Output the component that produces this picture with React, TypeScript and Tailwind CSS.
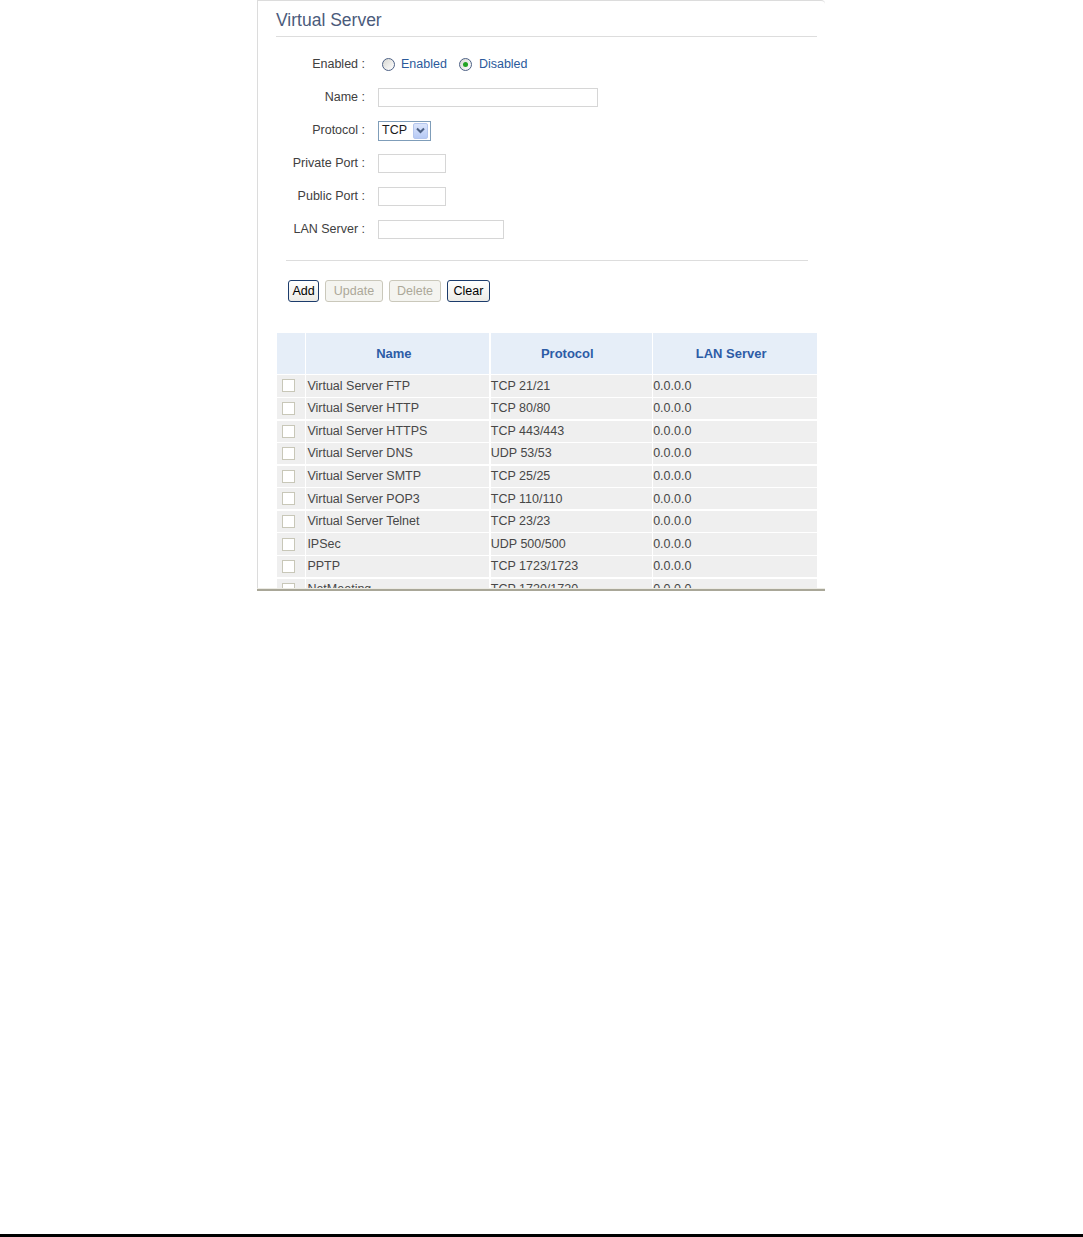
import React from "react";

const rows = [
  ["Virtual Server FTP", "TCP 21/21"],
  ["Virtual Server HTTP", "TCP 80/80"],
  ["Virtual Server HTTPS", "TCP 443/443"],
  ["Virtual Server DNS", "UDP 53/53"],
  ["Virtual Server SMTP", "TCP 25/25"],
  ["Virtual Server POP3", "TCP 110/110"],
  ["Virtual Server Telnet", "TCP 23/23"],
  ["IPSec", "UDP 500/500"],
  ["PPTP", "TCP 1723/1723"],
  ["NetMeeting", "TCP 1720/1720"],
];

const Radio = ({ checked }: { checked?: boolean }) => (
  <span className="flex h-[13px] w-[13px] items-center justify-center rounded-full border border-[#4d6185] bg-gradient-to-br from-[#d8d8d2] to-white">
    {checked && <span className="h-[5px] w-[5px] rounded-full bg-[#22a322]" />}
  </span>
);

const Field = ({ label, children }: { label: string; children: React.ReactNode }) => (
  <div className="flex h-[33px] items-center">
    <div className="w-[89px] whitespace-nowrap text-right text-[#404040]">{label}</div>
    <div className="ml-[13px] flex items-center">{children}</div>
  </div>
);

const Input = ({ w }: { w: string }) => <div className={`h-[19px] border border-[#d6d6d6] bg-white ${w}`} />;

const Btn = ({ label, w, disabled }: { label: string; w: string; disabled?: boolean }) => (
  <div
    className={`flex h-[22px] items-center justify-center rounded-[3px] border ${w} ${
      disabled
        ? "border-[#cac8bb] bg-[#f4f4f0] text-[#aca899]"
        : "border-[#1c3c6c] bg-gradient-to-b from-white to-[#ecebe6] text-black"
    }`}
  >
    {label}
  </div>
);

export default function App() {
  return (
    <div className="flex h-[1237px] flex-col bg-white text-[12.5px] leading-none" style={{ fontFamily: '"Liberation Sans", Arial, sans-serif' }}>
      <div className="ml-[257px] w-[568px]">
        <div className="h-[588px] overflow-hidden rounded-tr-[4px] border-l border-t border-[#dcdcdc] pl-[18px] pr-[8px]">
          <div className="flex h-[36px] items-center border-b border-[#dddddd] pt-[5px] text-[17.5px] text-[#4b5b7b]">
            Virtual Server
          </div>

          <div className="mt-[11px]">
            <Field label="Enabled :">
              <div className="ml-[4px] flex items-center gap-[6px] text-[#2b5a9b]">
                <Radio />
                <span>Enabled</span>
                <span className="ml-[6px]">
                  <Radio checked />
                </span>
                <span className="ml-[1px]">Disabled</span>
              </div>
            </Field>
            <Field label="Name :">
              <Input w="w-[220px]" />
            </Field>
            <Field label="Protocol :">
              <div className="flex h-[20px] w-[53px] items-center border border-[#7f9db9] bg-white pl-[3px] pr-[2px]">
                <span className="flex-1 text-[#1a1a1a]">TCP</span>
                <span className="flex h-[16px] w-[15px] items-center justify-center rounded-[2px] border border-[#b4c6ee] bg-gradient-to-b from-[#dbe5fb] to-[#b7caf5]">
                  <svg width="9" height="7" viewBox="0 0 9 7">
                    <path d="M1 1.5 L4.5 5 L8 1.5" fill="none" stroke="#4d6185" strokeWidth="2" />
                  </svg>
                </span>
              </div>
            </Field>
            <Field label="Private Port :">
              <Input w="w-[68px]" />
            </Field>
            <Field label="Public Port :">
              <Input w="w-[68px]" />
            </Field>
            <Field label="LAN Server :">
              <Input w="w-[126px]" />
            </Field>
          </div>

          <div className="ml-[10px] mr-[9px] mt-[14px] border-t border-[#dddddd]" />

          <div className="ml-[12px] mt-[19px] flex gap-[6px]">
            <Btn label="Add" w="w-[31px]" />
            <Btn label="Update" w="w-[58px]" disabled />
            <Btn label="Delete" w="w-[52px]" disabled />
            <Btn label="Clear" w="w-[43px]" />
          </div>

          <div className="ml-[1px] mt-[31px] grid w-[539px] grid-cols-[28px_183px_161px_164px] gap-[1.4px] text-[#474747]">
            <div className="h-[41px] bg-[#e6eef8]" />
            {["Name", "Protocol", "LAN Server"].map((h) => (
              <div key={h} className="flex h-[41px] items-center justify-center bg-[#e6eef8] pr-[8px] text-[13px] font-bold text-[#2d5ca6]">
                {h}
              </div>
            ))}
            {rows.map(([name, proto]) => (
              <React.Fragment key={name}>
                <div className="flex h-[21.2px] items-center bg-[#efefef] pl-[5px]">
                  <span className="h-[13px] w-[13px] border border-[#c8c7b8] bg-white" />
                </div>
                <div className="flex h-[21.2px] items-center bg-[#efefef] pl-[1px]">{name}</div>
                <div className="flex h-[21.2px] items-center bg-[#efefef]">{proto}</div>
                <div className="flex h-[21.2px] items-center bg-[#efefef]">0.0.0.0</div>
              </React.Fragment>
            ))}
          </div>
        </div>
        <div className="h-px bg-[#ecebe4]" />
        <div className="h-[2px] bg-[#a9a798]" />
      </div>
      <div className="flex-1" />
      <div className="h-[3px] bg-black" />
    </div>
  );
}
